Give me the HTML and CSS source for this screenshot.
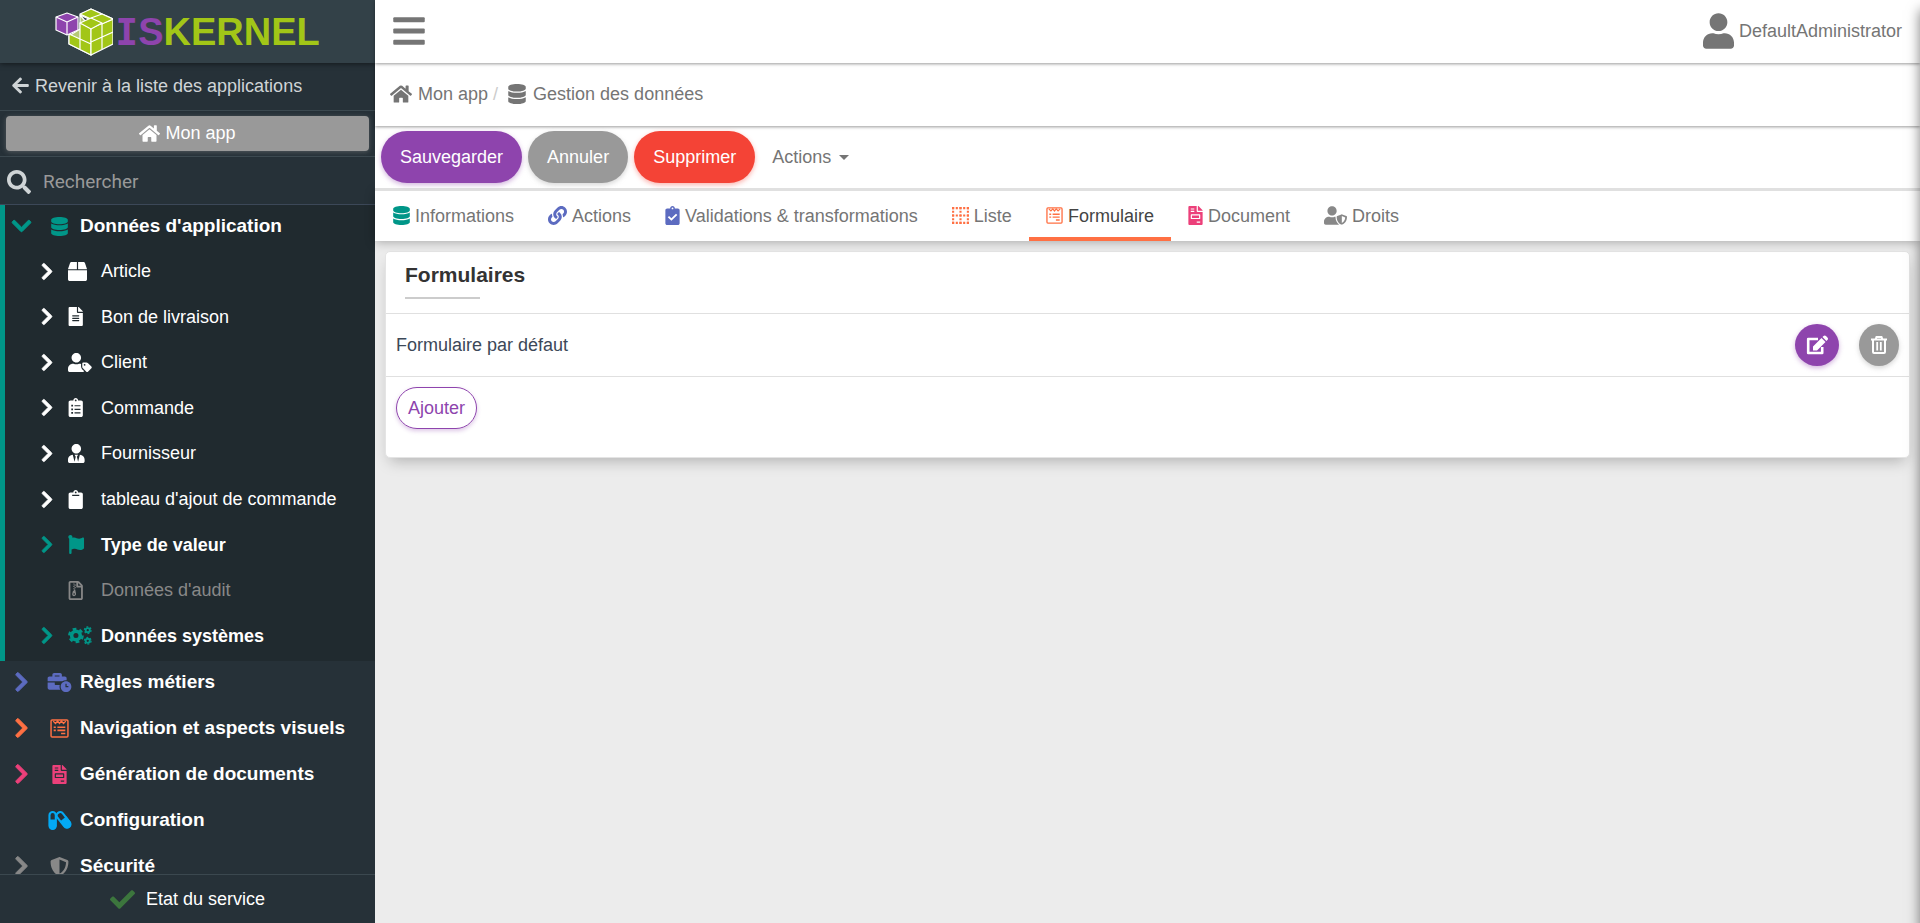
FILE: index.html
```html
<!DOCTYPE html>
<html lang="fr">
<head>
  <meta charset="UTF-8" />
  <title>Gestion des données</title>
  <meta name="viewport" content="width=device-width, initial-scale=1.0" />
  <link rel="stylesheet" href="styles.css">
</head>
<body>

<!-- Icon sprite -->
<svg class="sprite" aria-hidden="true">
  <symbol id="i-right" viewBox="0 0 320 512"><path stroke="currentColor" stroke-width="22" d="M285.476 272.971L91.132 467.314c-9.373 9.373-24.569 9.373-33.941 0l-22.667-22.667c-9.357-9.357-9.375-24.522-.04-33.901L188.505 256 34.484 101.255c-9.335-9.379-9.317-24.544.04-33.901l22.667-22.667c9.373-9.373 24.569-9.373 33.941 0L285.475 239.03c9.373 9.372 9.373 24.568.001 33.941z"/></symbol>
  <symbol id="i-down" viewBox="0 0 448 512"><path stroke="currentColor" stroke-width="22" d="M207.029 381.476L12.686 187.132c-9.373-9.373-9.373-24.569 0-33.941l22.667-22.667c9.357-9.357 24.522-9.375 33.901-.04L224 284.505l154.745-154.021c9.379-9.335 24.544-9.317 33.901.04l22.667 22.667c9.373 9.373 9.373 24.569 0 33.941L240.971 381.476c-9.373 9.372-24.569 9.372-33.942 0z"/></symbol>
  <symbol id="i-database" viewBox="0 0 448 512"><path d="M448 73.143v45.714C448 159.143 347.667 192 224 192S0 159.143 0 118.857V73.143C0 32.857 100.333 0 224 0s224 32.857 224 73.143zM448 176v102.857C448 319.143 347.667 352 224 352S0 319.143 0 278.857V176c48.125 33.143 136.208 48.572 224 48.572S399.874 209.143 448 176zm0 160v102.857C448 479.143 347.667 512 224 512S0 479.143 0 438.857V336c48.125 33.143 136.208 48.572 224 48.572S399.874 369.143 448 336z"/></symbol>
  <symbol id="i-bars" viewBox="0 0 448 512"><rect y="60" width="448" height="72" rx="16"/><rect y="220" width="448" height="72" rx="16"/><rect y="380" width="448" height="72" rx="16"/></symbol>
  <symbol id="i-home" viewBox="0 0 576 512"><path d="M280.37 148.26L96 300.11V464a16 16 0 0 0 16 16l112.06-.29a16 16 0 0 0 15.92-16V368a16 16 0 0 1 16-16h64a16 16 0 0 1 16 16v95.64a16 16 0 0 0 16 16.05L464 480a16 16 0 0 0 16-16V300L295.67 148.26a12.19 12.19 0 0 0-15.3 0zM571.6 251.47L488 182.56V44.05a12 12 0 0 0-12-12h-56a12 12 0 0 0-12 12v72.61L318.47 43a48 48 0 0 0-61 0L4.34 251.47a12 12 0 0 0-1.6 16.9l25.5 31A12 12 0 0 0 45.15 301l235.22-193.74a12.19 12.19 0 0 1 15.3 0L530.9 301a12 12 0 0 0 16.9-1.6l25.5-31a12 12 0 0 0-1.7-16.93z"/></symbol>
  <symbol id="i-search" viewBox="0 0 512 512"><path d="M505 442.7L405.3 343c-4.5-4.5-10.6-7-17-7H372c27.6-35.3 44-79.7 44-128C416 93.1 322.9 0 208 0S0 93.1 0 208s93.1 208 208 208c48.3 0 92.7-16.4 128-44v16.3c0 6.4 2.5 12.5 7 17l99.7 99.7c9.4 9.4 24.6 9.4 33.9 0l28.3-28.3c9.4-9.4 9.4-24.6.1-34zM208 336c-70.7 0-128-57.2-128-128 0-70.7 57.2-128 128-128 70.7 0 128 57.2 128 128 0 70.7-57.2 128-128 128z"/></symbol>
  <symbol id="i-arrow" viewBox="0 0 448 512"><path d="M257.5 445.1l-22.2 22.2c-9.4 9.4-24.6 9.4-33.9 0L7 273c-9.4-9.4-9.4-24.6 0-33.9L201.4 44.7c9.4-9.4 24.6-9.4 33.9 0l22.2 22.2c9.5 9.5 9.3 25-.4 34.3L136.6 216H424c13.3 0 24 10.7 24 24v32c0 13.3-10.7 24-24 24H136.6l120.5 114.8c9.8 9.3 10 24.8.4 34.3z"/></symbol>
  <symbol id="i-user" viewBox="0 0 448 512"><path d="M224 256c70.7 0 128-57.3 128-128S294.7 0 224 0 96 57.3 96 128s57.3 128 128 128zm89.6 32h-16.7c-22.2 10.2-46.9 16-72.9 16s-50.6-5.8-72.9-16h-16.7C60.2 288 0 348.2 0 422.4V464c0 26.5 21.5 48 48 48h352c26.5 0 48-21.5 48-48v-41.6c0-74.2-60.2-134.4-134.4-134.4z"/></symbol>
  <symbol id="i-check" viewBox="0 0 512 512"><path d="M173.898 439.404l-166.4-166.4c-9.997-9.997-9.997-26.206 0-36.204l36.203-36.204c9.997-9.998 26.207-9.998 36.204 0L192 312.69 432.095 72.596c9.997-9.997 26.207-9.997 36.204 0l36.203 36.204c9.997 9.997 9.997 26.206 0 36.204l-294.4 294.401c-9.998 9.997-26.207 9.997-36.204-.001z"/></symbol>
  <symbol id="i-link" viewBox="0 0 512 512"><path d="M326.612 185.391c59.747 59.809 58.927 155.698.36 214.59-.11.12-.24.25-.36.37l-67.2 67.2c-59.27 59.27-155.699 59.262-214.96 0-59.27-59.26-59.27-155.7 0-214.96l37.106-37.106c9.84-9.84 26.786-3.3 27.294 10.606.648 17.722 3.826 35.527 9.69 52.721 1.986 5.822.567 12.262-3.783 16.612l-13.087 13.087c-28.026 28.026-28.905 73.66-1.155 101.96 28.024 28.579 74.086 28.749 102.325.51l67.2-67.19c28.191-28.191 28.073-73.757 0-101.83-3.701-3.694-7.429-6.564-10.341-8.569a16.037 16.037 0 0 1-6.947-12.606c-.396-10.567 3.348-21.456 11.698-29.806l21.054-21.055c5.521-5.521 14.182-6.199 20.584-1.731a152.482 152.482 0 0 1 20.522 17.197zM467.547 44.449c-59.261-59.262-155.69-59.27-214.96 0l-67.2 67.2c-.12.12-.25.25-.36.37-58.566 58.892-59.387 154.781.36 214.59a152.454 152.454 0 0 0 20.521 17.196c6.402 4.468 15.064 3.789 20.584-1.731l21.054-21.055c8.35-8.35 12.094-19.239 11.698-29.806a16.037 16.037 0 0 0-6.947-12.606c-2.912-2.005-6.64-4.875-10.341-8.569-28.073-28.073-28.191-73.639 0-101.83l67.2-67.19c28.239-28.239 74.3-28.069 102.325.51 27.75 28.3 26.872 73.934-1.155 101.96l-13.087 13.087c-4.35 4.35-5.769 10.79-3.783 16.612 5.864 17.194 9.042 34.999 9.69 52.721.509 13.906 17.454 20.446 27.294 10.606l37.106-37.106c59.271-59.259 59.271-155.699.001-214.959z"/></symbol>
  <symbol id="i-box" viewBox="0 0 512 512" preserveAspectRatio="xMinYMid"><path d="M509.5 184.6L458.9 32.8C452.4 13.2 434.1 0 413.4 0H272v192h238.7c-.4-2.5-.4-5-1.2-7.4zM240 0H98.6c-20.7 0-39 13.2-45.5 32.8L2.5 184.6c-.8 2.4-.8 4.9-1.2 7.4H240V0zM0 224v240c0 26.5 21.5 48 48 48h416c26.5 0 48-21.5 48-48V224H0z"/></symbol>
  <symbol id="i-file" viewBox="-16 0 400 512" preserveAspectRatio="xMinYMid"><path d="M224 136V0H24C10.7 0 0 10.7 0 24v464c0 13.3 10.7 24 24 24h336c13.3 0 24-10.7 24-24V160H248c-13.2 0-24-10.8-24-24zm64 236c0 6.6-5.4 12-12 12H108c-6.6 0-12-5.4-12-12v-8c0-6.6 5.4-12 12-12h168c6.6 0 12 5.4 12 12v8zm0-64c0 6.6-5.4 12-12 12H108c-6.6 0-12-5.4-12-12v-8c0-6.6 5.4-12 12-12h168c6.6 0 12 5.4 12 12v8zm0-72v8c0 6.6-5.4 12-12 12H108c-6.6 0-12-5.4-12-12v-8c0-6.6 5.4-12 12-12h168c6.6 0 12 5.4 12 12zm96-114.1v6.1H256V0h6.1c6.4 0 12.5 2.5 17 7l97.9 98c4.5 4.5 7 10.6 7 16.9z"/></symbol>
  <symbol id="i-invoice" viewBox="0 0 384 512"><path d="M288 256H96v64h192v-64zm89-151L279.1 7c-4.5-4.5-10.6-7-17-7H256v128h128v-6.1c0-6.3-2.5-12.4-7-16.9zm-153 31V0H24C10.7 0 0 10.7 0 24v464c0 13.3 10.7 24 24 24h336c13.3 0 24-10.7 24-24V160H248c-13.2 0-24-10.8-24-24zM64 72c0-4.42 3.58-8 8-8h80c4.42 0 8 3.58 8 8v16c0 4.42-3.58 8-8 8H72c-4.42 0-8-3.58-8-8V72zm0 64c0-4.42 3.58-8 8-8h80c4.42 0 8 3.58 8 8v16c0 4.42-3.58 8-8 8H72c-4.42 0-8-3.58-8-8v-16zm256 304c0 4.42-3.58 8-8 8h-80c-4.42 0-8-3.58-8-8v-16c0-4.42 3.58-8 8-8h80c4.42 0 8 3.58 8 8v16zm0-200v96c0 8.84-7.16 16-16 16H80c-8.84 0-16-7.16-16-16v-96c0-8.84 7.16-16 16-16h224c8.84 0 16 7.16 16 16z"/></symbol>
  <symbol id="i-usertag" viewBox="0 0 640 512" preserveAspectRatio="xMinYMid"><path d="M630.6 364.9l-90.3-90.2c-12-12-28.3-18.7-45.3-18.7h-79.3c-17.7 0-32 14.3-32 32v79.2c0 17 6.7 33.2 18.7 45.2l90.3 90.2c12.5 12.5 32.8 12.5 45.3 0l92.5-92.5c12.6-12.5 12.6-32.7.1-45.2zm-182.8-21c-13.3 0-24-10.7-24-24s10.7-24 24-24 24 10.7 24 24c0 13.2-10.7 24-24 24zm-223.8-88c70.7 0 128-57.3 128-128C352 57.3 294.7 0 224 0S96 57.3 96 128c0 70.6 57.3 127.9 128 127.9zm127.8 111.2V294c-12.2-3.6-24.9-6.2-38.2-6.2h-16.7c-22.2 10.2-46.9 16-72.9 16s-50.6-5.8-72.9-16h-16.7C60.2 287.9 0 348.1 0 422.3v41.6c0 26.5 21.5 48 48 48h352c15.5 0 29.1-7.5 37.9-18.9l-58-58c-18.1-18.1-28.1-42.2-28.1-67.9z"/></symbol>
  <symbol id="i-cliplist" viewBox="-16 0 400 512" preserveAspectRatio="xMinYMid"><path fill-rule="evenodd" d="M336 64h-80c0-35.300-28.700-64-64-64s-64 28.700-64 64H48C21.500 64 0 85.500 0 112v352c0 26.500 21.500 48 48 48h288c26.500 0 48-21.500 48-48V112c0-26.500-21.500-48-48-48zM192 40a24 24 0 0 1 0 48 24 24 0 0 1 0-48zM72 184h48v48H72zM72 280h48v48H72zM72 376h48v48H72zM160 192h160v32H160zM160 288h160v32H160zM160 384h160v32H160z"/></symbol>
  <symbol id="i-clipboard" viewBox="-16 0 400 512" preserveAspectRatio="xMinYMid"><path fill-rule="evenodd" d="M384 112v352c0 26.500-21.500 48-48 48H48c-26.500 0-48-21.500-48-48V112c0-26.500 21.500-48 48-48h80c0-35.300 28.700-64 64-64s64 28.700 64 64h80c26.500 0 48 21.500 48 48zM192 40a24 24 0 0 0 0 48 24 24 0 0 0 0-48zM96 128h192v32H96z"/></symbol>
  <symbol id="i-clipcheck" viewBox="0 0 384 512"><path fill-rule="evenodd" d="M336 64h-80c0-35.300-28.700-64-64-64s-64 28.700-64 64H48C21.500 64 0 85.500 0 112v352c0 26.500 21.500 48 48 48h288c26.500 0 48-21.500 48-48V112c0-26.500-21.500-48-48-48zM192 40a24 24 0 0 1 0 48 24 24 0 0 1 0-48zM64 304l36-36 62 60 124-122 36 36-160 158z"/></symbol>
  <symbol id="i-usertie" viewBox="0 0 448 512" preserveAspectRatio="xMinYMid"><path d="M224 256c70.7 0 128-57.300 128-128S294.700 0 224 0 96 57.300 96 128s57.300 128 128 128zm95.400 32.600L272 480l-32-136 32-56h-96l32 56-32 136-47.400-191.400C56.900 292 0 350.300 0 422.400V464c0 26.500 21.500 48 48 48h352c26.500 0 48-21.500 48-48v-41.600c0-72.100-56.900-130.400-128.600-133.800z"/></symbol>
  <symbol id="i-flag" viewBox="0 0 512 512" preserveAspectRatio="xMinYMid"><path d="M300 98.783C250 98.783 215 64 165 64c-20 0-35 4.384-48.700 12.013a55.947 55.947 0 0 0 3.586-23.562C118.117 24.015 94.806 1.206 66.338.048 34.345-1.254 8 24.296 8 56c0 19.026 9.497 35.825 24 45.945V488c0 13.255 10.745 24 24 24h16c13.255 0 24-10.745 24-24v-94.4c24-12.064 50-22.122 90-22.122 50 0 84 34.783 140 34.783 40 0 70-16.294 94-34.858 8-6 12-12 12-22V96c0-23-20-36-38-27-26 14-56 29.783-94 29.783z"/></symbol>
  <symbol id="i-zip" viewBox="-16 0 400 512" preserveAspectRatio="xMinYMid"><path fill-rule="evenodd" d="M48 0h204c13 0 25 5 34 14l84 84c9 9 14 21 14 34v332c0 26-22 48-48 48H48c-26 0-48-22-48-48V48C0 22 22 0 48 0zM48 48v416h288V176H232c-13 0-24-11-24-24V48zM256 52v76h76z"/><path d="M128 64h32v32h-32zM160 96h32v32h-32zM128 128h32v32h-32zM160 160h32v32h-32zM128 192h32v32h-32zM144 232h34l22 108c8 38-18 68-52 68s-58-30-50-66l20-80h26z"/><ellipse cx="149" cy="352" rx="25" ry="20" class="zip-hole"/></symbol>
  <symbol id="i-cogs" viewBox="0 0 640 512" preserveAspectRatio="xMinYMid"><g fill="none" stroke="currentColor"><circle cx="214" cy="256" r="116" stroke-width="96"/><circle cx="214" cy="256" r="180" stroke-width="64" stroke-dasharray="100 88.500"/><circle cx="532" cy="112" r="56" stroke-width="50"/><circle cx="532" cy="112" r="90" stroke-width="34" stroke-dasharray="50 44.200"/><circle cx="532" cy="400" r="56" stroke-width="50"/><circle cx="532" cy="400" r="90" stroke-width="34" stroke-dasharray="50 44.200"/></g></symbol>
  <symbol id="i-business" viewBox="0 0 640 512"><path d="M496 224c-79.590 0-144 64.410-144 144s64.410 144 144 144 144-64.410 144-144-64.410-144-144-144zm64 150.290c0 5.340-4.370 9.710-9.710 9.710h-60.570c-5.340 0-9.710-4.370-9.710-9.710v-76.570c0-5.340 4.370-9.710 9.710-9.710h12.570c5.340 0 9.710 4.370 9.710 9.710V352h38.290c5.340 0 9.710 4.370 9.710 9.710v12.580zM496 192c5.400 0 10.720.33 16 .81V144c0-25.600-22.400-48-48-48h-80V48c0-25.600-22.400-48-48-48H176c-25.600 0-48 22.400-48 48v48H48c-25.600 0-48 22.400-48 48v80h395.120c28.600-20.090 63.350-32 100.880-32zM320 96H192V64h128v32zm6.820 224H208c-8.840 0-16-7.160-16-16v-48H0v144c0 25.600 22.400 48 48 48h291.430C327.100 423.960 320 396.820 320 368c0-16.660 2.480-32.720 6.820-48z"/></symbol>
  <symbol id="i-form" viewBox="0 0 18 18"><rect x="1" y="1" width="16" height="16" rx="1" fill="none" stroke="currentColor" stroke-width="1.400"/><path d="M3 2l2.200 2.200L7.200 2 9 4.200 10.800 2l2 2.200L15 2" fill="none" stroke="currentColor" stroke-width="1.300"/><path d="M3.500 7h2v1.500h-2zM7 7h7.500v1.500H7zM3.500 10h2v1.500h-2zM7 10h7.500v1.500H7zM10.500 13h4v1.500h-4z"/></symbol>
  <symbol id="i-dots" viewBox="0 0 16 18"><g fill="none" stroke="currentColor" stroke-width="2" stroke-dasharray="2 1.500"><path d="M0 2h16M0 9h16M0 16h16"/><path d="M1 1v17M8 1v17M15 1v17"/></g></symbol>
  <symbol id="i-pills" viewBox="0 0 22 18"><g fill="none" stroke="currentColor" stroke-width="2"><rect x="1.500" y="1" width="6" height="16" rx="3"/><rect x="12" y="0" width="6.500" height="17" rx="3.200" transform="rotate(-38 15 9)"/></g><path d="M1 8h7v6a3.500 3.500 0 0 1-7 0zM11.500 10l6-5 3.800 5c2.500 4-2.500 8.500-6 5z"/></symbol>
  <symbol id="i-shield" viewBox="0 0 512 512"><path d="M466.5 83.700l-192-80a48.150 48.150 0 0 0-36.900 0l-192 80C27.700 91.100 16 108.600 16 128c0 198.500 114.500 335.700 221.500 380.300 11.800 4.900 25.100 4.900 36.900 0C360.100 472.600 496 349.300 496 128c0-19.400-11.700-36.900-29.500-44.300zM256.100 446.300l-.1-381 175.900 73.300c-3.300 151.400-82.100 261.100-175.800 307.700z"/></symbol>
  <symbol id="i-usershield" viewBox="0 0 640 512"><path d="M622.3 271.1l-115.2-45c-4.1-1.600-12.600-3.700-22.200 0l-115.200 45c-10.700 4.200-17.700 14-17.700 24.900 0 111.600 68.700 188.800 132.900 213.900 9.600 3.700 18 1.600 22.200 0C558.400 489.900 640 420.500 640 296c0-10.900-7-20.700-17.700-24.900zM496 462.400V273.300l95.500 37.300c-5.600 87.100-60.900 135.400-95.500 151.800zM224 256c70.700 0 128-57.300 128-128S294.700 0 224 0 96 57.300 96 128s57.300 128 128 128zm96 40c0-2.500.8-4.800 1.100-7.200-2.500-.1-4.900-.8-7.500-.8h-16.700c-22.200 10.200-46.900 16-72.900 16s-50.600-5.800-72.900-16h-16.700C60.200 288 0 348.200 0 422.400V464c0 26.500 21.500 48 48 48h352c6.800 0 13.300-1.500 19.200-4-54-42.900-99.200-116.700-99.200-212z"/></symbol>
  <symbol id="i-edit" viewBox="0 0 22 20"><path d="M12 4H2.200v14h14v-6" fill="none" stroke="currentColor" stroke-width="2.600" stroke-linejoin="round"/><path d="M7 11.500L15.500 3l4 4-8.500 8.500H7zM16.500 2l1-1c.8-.8 1.800-.8 2.500 0L21.400 2.500c.8.700.8 1.700 0 2.500l-1 1z"/></symbol>
  <symbol id="i-trash" viewBox="0 0 18 20"><g fill="none" stroke="currentColor" stroke-width="2"><path d="M1 4.500h16M5.500 4.500L6.500 2h5l1 2.500M3 4.500V17a1 1 0 0 0 1 1h10a1 1 0 0 0 1-1V4.500"/><path d="M7.200 7v8.500M10.800 7v8.500" stroke-width="1.800"/></g></symbol>
</svg>

<div class="layout">
  <!-- Sidebar -->
  <aside class="sidebar">
    <div class="brand">
      <svg class="cubes" viewBox="0 0 58 48">
        <g stroke="#fff" stroke-width="1.200" stroke-linejoin="round">
          <path d="M25 7l11-6 22 10-11 6z" fill="#c8d6a0"/>
          <path d="M25 7v14l-11 7v8l22 11V20z" fill="#b5c975"/>
          <path d="M14 26l22 10v11L14 36zM25 15l11 5v16l-11-5z" fill="#a2c617"/>
          <path d="M36 20l22-9v25L36 47z" fill="#a2c617"/>
          <path d="M25 6l11-5 22 10-11 5-11-5z" fill="#a2c617"/>
          <path d="M25 15l11-5 11 5-11 6z" fill="#a2c617"/>
          <path d="M47 15v26M36 34l22-10M25 31v10M36 10l11-4" fill="none"/>
          <path d="M1 9l11-4 11 4v13l-11 5-11-5z" fill="#8e44ad"/>
          <path d="M1 9l11 5 11-5M12 14v13" fill="none"/>
        </g>
      </svg>
      <span class="brand-name"><span class="brand-is"><span class="brand-i">I</span>S</span>KERNEL</span>
    </div>
    <a href="#" class="back"><svg class="ico"><use href="#i-arrow"/></svg>Revenir à la liste des applications</a>
    <div class="app-box">
      <button class="app-btn"><svg class="ico wide"><use href="#i-home"/></svg>Mon app</button>
    </div>
    <div class="search">
      <label for="search"><svg class="ico-search"><use href="#i-search"/></svg></label>
      <input type="text" id="search" placeholder="Rechercher" aria-label="Rechercher" />
    </div>

    <nav class="menu">
      <div class="group open teal">
        <a href="#" class="item"><svg class="chev"><use href="#i-down"/></svg><svg class="ico-menu"><use href="#i-database"/></svg><span>Données d'application</span></a>
        <div class="sub">
          <a href="#" class="subitem"><svg class="chev"><use href="#i-right"/></svg><svg class="ico-menu"><use href="#i-box"/></svg><span>Article</span></a>
          <a href="#" class="subitem"><svg class="chev"><use href="#i-right"/></svg><svg class="ico-menu"><use href="#i-file"/></svg><span>Bon de livraison</span></a>
          <a href="#" class="subitem"><svg class="chev"><use href="#i-right"/></svg><svg class="ico-menu"><use href="#i-usertag"/></svg><span>Client</span></a>
          <a href="#" class="subitem"><svg class="chev"><use href="#i-right"/></svg><svg class="ico-menu"><use href="#i-cliplist"/></svg><span>Commande</span></a>
          <a href="#" class="subitem"><svg class="chev"><use href="#i-right"/></svg><svg class="ico-menu"><use href="#i-usertie"/></svg><span>Fournisseur</span></a>
          <a href="#" class="subitem"><svg class="chev"><use href="#i-right"/></svg><svg class="ico-menu"><use href="#i-clipboard"/></svg><span>tableau d'ajout de commande</span></a>
          <a href="#" class="subitem strong"><svg class="chev"><use href="#i-right"/></svg><svg class="ico-menu"><use href="#i-flag"/></svg><span>Type de valeur</span></a>
          <a href="#" class="subitem muted"><svg class="chev"></svg><svg class="ico-menu"><use href="#i-zip"/></svg><span>Données d'audit</span></a>
          <a href="#" class="subitem strong"><svg class="chev"><use href="#i-right"/></svg><svg class="ico-menu"><use href="#i-cogs"/></svg><span>Données systèmes</span></a>
        </div>
      </div>
      <div class="group indigo"><a href="#" class="item"><svg class="chev"><use href="#i-right"/></svg><svg class="ico-menu"><use href="#i-business"/></svg><span>Règles métiers</span></a></div>
      <div class="group orange"><a href="#" class="item"><svg class="chev"><use href="#i-right"/></svg><svg class="ico-menu"><use href="#i-form"/></svg><span>Navigation et aspects visuels</span></a></div>
      <div class="group pink"><a href="#" class="item"><svg class="chev"><use href="#i-right"/></svg><svg class="ico-menu"><use href="#i-invoice"/></svg><span>Génération de documents</span></a></div>
      <div class="group blue"><a href="#" class="item"><svg class="chev"></svg><svg class="ico-menu"><use href="#i-pills"/></svg><span>Configuration</span></a></div>
      <div class="group grey"><a href="#" class="item"><svg class="chev"><use href="#i-right"/></svg><svg class="ico-menu"><use href="#i-shield"/></svg><span>Sécurité</span></a></div>
    </nav>

    <div class="status"><svg class="ico-status"><use href="#i-check"/></svg>Etat du service</div>
  </aside>

  <!-- Main -->
  <main class="main">
    <header class="topbar">
      <button class="burger" aria-label="Menu"><svg><use href="#i-bars"/></svg></button>
      <a href="#" class="account"><svg><use href="#i-user"/></svg>DefaultAdministrator</a>
    </header>

    <div class="breadcrumb">
      <a href="#"><svg><use href="#i-home"/></svg>Mon app</a>
      <span class="slash">/</span>
      <a href="#"><svg class="db"><use href="#i-database"/></svg>Gestion des données</a>
    </div>

    <div class="toolbar">
      <button class="btn purple">Sauvegarder</button>
      <button class="btn gray">Annuler</button>
      <button class="btn red">Supprimer</button>
      <button class="dropdown">Actions<span class="caret"></span></button>
    </div>

    <nav class="tabs">
      <a href="#" class="tab"><svg class="teal w17"><use href="#i-database"/></svg>Informations</a>
      <a href="#" class="tab"><svg class="indigo w19"><use href="#i-link"/></svg>Actions</a>
      <a href="#" class="tab"><svg class="indigo w15"><use href="#i-clipcheck"/></svg>Validations &amp; transformations</a>
      <a href="#" class="tab"><svg class="orange w17"><use href="#i-dots"/></svg>Liste</a>
      <a href="#" class="tab active"><svg class="orange w17"><use href="#i-form"/></svg>Formulaire</a>
      <a href="#" class="tab"><svg class="pink w15"><use href="#i-invoice"/></svg>Document</a>
      <a href="#" class="tab"><svg class="grey w23"><use href="#i-usershield"/></svg>Droits</a>
    </nav>

    <section class="card">
      <div class="card-header">
        <h2>Formulaires</h2>
      </div>
      <div class="row">
        <span class="row-name">Formulaire par défaut</span>
        <button class="round edit" aria-label="Modifier"><svg><use href="#i-edit"/></svg></button>
        <button class="round delete" aria-label="Supprimer"><svg><use href="#i-trash"/></svg></button>
      </div>
      <div class="card-footer">
        <button class="add">Ajouter</button>
      </div>
    </section>
  </main>
</div>

<!-- Closed side panel, only its shadow shows -->
<div class="drawer"></div>

</body>
</html>
```
FILE: styles.css
```css
* {
  box-sizing: border-box;
}

html, body {
  margin: 0;
  height: 100%;
  overflow: hidden;
  background: #ececec;
  color: #757575;
  font-family: "Liberation Sans", Arial, sans-serif;
  font-size: 18px;
  line-height: 24px;
}

a {
  color: inherit;
  text-decoration: none;
}

button, input {
  font: inherit;
  border: none;
  padding: 0;
  background: none;
  color: inherit;
}

button {
  cursor: pointer;
}

svg {
  fill: currentColor;
  flex-shrink: 0;
}

.sprite {
  position: absolute;
  width: 0;
  height: 0;
}

.layout {
  display: flex;
  height: 100vh;
}

/* Colors */
.teal { color: #009688; }
.indigo { color: #5c6bc0; }
.orange { color: #ff7043; }
.pink { color: #ec407a; }
.blue { color: #03a9f4; }
.grey { color: #888; }

/* Sidebar */
.sidebar {
  width: 375px;
  flex-shrink: 0;
  display: flex;
  flex-direction: column;
  background: #263138;
  color: #fff;
}

.brand {
  height: 63px;
  flex-shrink: 0;
  display: flex;
  align-items: center;
  justify-content: center;
  gap: 2px;
  background: #334148;
  box-shadow: 0 1px 5px rgba(0, 0, 0, 0.5);
}

.cubes {
  width: 58px;
  height: 48px;
}

.brand-name {
  font-size: 38px;
  font-weight: bold;
  color: #a2c617;
}

.brand-is {
  color: #8e44ad;
}

.brand-i {
  font-family: "DejaVu Sans Mono", monospace;
}

.back {
  display: flex;
  align-items: center;
  gap: 6px;
  height: 48px;
  padding: 0 12px 2px;
  color: #cfd4d6;
  border-bottom: 1px solid #3b484f;
}

.ico {
  width: 17px;
  height: 19px;
}

.ico.wide {
  width: 21px;
}

.app-box {
  padding: 5px 6px;
  border-bottom: 1px solid #3b484f;
}

.app-btn {
  display: flex;
  align-items: center;
  justify-content: center;
  gap: 5px;
  width: 100%;
  height: 35px;
  padding-bottom: 1px;
  border-radius: 4px;
  background: #999;
  color: #fff;
  box-shadow: 0 1px 5px rgba(153, 153, 153, 0.4);
}

.search {
  display: flex;
  align-items: center;
  gap: 12px;
  height: 48px;
  padding: 2px 7px 0;
  border-bottom: 1px solid #3c4858;
}

.search label {
  display: flex;
}

.ico-search {
  width: 24px;
  height: 24px;
  color: #cfd4d6;
}

.search input {
  flex: 1;
  min-width: 0;
  outline: none;
  font-family: Roboto, sans-serif;
  font-size: 19px;
}

.search input::placeholder {
  color: #999;
  opacity: 1;
}

.menu {
  flex: 1;
  min-height: 0;
  overflow: hidden;
}

.group.open {
  background: #202a2f;
  border-left: 5px solid #009688;
}

.item, .subitem {
  display: flex;
  align-items: center;
}

.item {
  height: 46px;
  padding: 0 0 4px 11px;
  font-size: 19px;
  font-weight: bold;
}

.item span, .subitem span {
  color: #fff;
}

.item .chev {
  width: 21px;
  height: 22px;
}

.item .ico-menu {
  width: 25px;
  height: 19px;
  margin: 0 8px 0 15px;
}

.open .item {
  padding-left: 6px;
}

.sub {
  display: grid;
  grid-auto-rows: 1fr;
  min-height: 410px;
}

.subitem {
  padding: 0 0 5px 36px;
  color: #fff;
}

.subitem .chev {
  width: 12px;
  height: 19px;
}

.subitem .ico-menu {
  width: 24px;
  height: 19px;
  margin: 0 9px 0 15px;
}

.subitem.strong {
  color: #009688;
  font-weight: bold;
}

.subitem.muted, .subitem.muted span {
  color: #888;
}

.zip-hole {
  fill: #202a2f;
}

.status {
  display: flex;
  align-items: center;
  justify-content: center;
  gap: 11px;
  height: 49px;
  flex-shrink: 0;
  border-top: 1px solid #3b484f;
}

.ico-status {
  width: 25px;
  height: 25px;
  color: #3c763d;
}

/* Main */
.main {
  flex: 1;
  min-width: 0;
}

.topbar, .breadcrumb {
  position: relative;
  display: flex;
  align-items: center;
  height: 63px;
  background: #fff;
  box-shadow: 0 1px 3px rgba(0, 0, 0, 0.4);
}

.topbar {
  z-index: 3;
  justify-content: space-between;
  padding: 0 18px 1px;
}

.burger {
  display: flex;
}

.burger svg {
  width: 32px;
  height: 36px;
}

.account {
  display: flex;
  align-items: center;
  gap: 5px;
}

.account svg {
  width: 31px;
  height: 36px;
}

.breadcrumb {
  z-index: 2;
  gap: 5px;
  padding: 0 15px 1px;
}

.breadcrumb a {
  display: flex;
  align-items: center;
  gap: 6px;
}

.breadcrumb svg {
  width: 22px;
  height: 20px;
}

.breadcrumb .db {
  width: 20px;
}

.slash {
  width: 9px;
  color: #ccc;
}

.toolbar {
  position: relative;
  z-index: 1;
  display: flex;
  align-items: center;
  gap: 6px;
  height: 65px;
  background: #fff;
  padding: 0 6px;
  border-bottom: 3px solid #e0e0e0;
}

.btn {
  height: 52px;
  padding: 0 19px;
  border-radius: 26px;
  color: #fff;
}

.purple {
  background: #8e44ad;
  box-shadow: 0 2px 5px rgba(142, 68, 173, 0.4);
}

.gray {
  background: #999;
  box-shadow: 0 2px 5px rgba(153, 153, 153, 0.4);
}

.red {
  background: #f44336;
  box-shadow: 0 2px 5px rgba(244, 67, 54, 0.4);
}

.dropdown {
  display: flex;
  align-items: center;
  gap: 8px;
  padding: 0 11px;
}

.caret {
  border: 5px solid transparent;
  border-top-color: #757575;
  border-bottom: none;
}

.tabs {
  position: relative;
  display: flex;
  height: 50px;
  padding-left: 1px;
  background: #fff;
  box-shadow: 0 1px 10px rgba(0, 0, 0, 0.3);
}

.tab {
  display: flex;
  align-items: center;
  gap: 5px;
  padding: 3px 17px 0;
  border-bottom: 4px solid transparent;
}

.tab.active {
  color: #444;
  border-bottom-color: #ff7043;
}

.tab svg {
  height: 19px;
}

.w15 { width: 15px; }
.w17 { width: 17px; }
.w19 { width: 19px; }
.w23 { width: 23px; }

.card {
  margin: 10px;
  background: #fff;
  border: 1px solid #e4e4e4;
  border-radius: 5px;
  box-shadow: 0 8px 14px -5px rgba(0, 0, 0, 0.25);
}

.card-header {
  padding: 11px 19px 14px;
  border-bottom: 1px solid #e0e0e0;
}

.card-header h2 {
  margin: 0;
  font-size: 21px;
  line-height: 24px;
  color: #333;
}

.card-header h2::after {
  content: "";
  display: block;
  width: 75px;
  margin-top: 10px;
  border-bottom: 2px solid #ccc;
}

.row {
  display: flex;
  align-items: center;
  gap: 20px;
  padding: 10px;
  border-bottom: 1px solid #e0e0e0;
}

.row-name {
  flex: 1;
  color: #3c4858;
}

.round {
  display: flex;
  align-items: center;
  justify-content: center;
  height: 42px;
  border-radius: 50%;
  color: #fff;
}

.edit {
  width: 44px;
  background: #8e44ad;
  box-shadow: 0 2px 5px rgba(142, 68, 173, 0.4);
}

.delete {
  width: 40px;
  background: #999;
  box-shadow: 0 2px 5px rgba(153, 153, 153, 0.4);
}

.edit svg {
  width: 22px;
  height: 20px;
}

.delete svg {
  width: 18px;
  height: 20px;
}

.card-footer {
  padding: 10px 10px 28px;
}

.add {
  display: block;
  height: 42px;
  padding: 0 11px;
  border: 1px solid #8e44ad;
  border-radius: 21px;
  color: #8e44ad;
  box-shadow: 0 2px 4px rgba(142, 68, 173, 0.3);
}

.drawer {
  position: fixed;
  top: 0;
  bottom: 0;
  left: 100%;
  width: 300px;
  z-index: 5;
  box-shadow: 0 10px 12px rgba(0, 0, 0, 0.5);
}
```
